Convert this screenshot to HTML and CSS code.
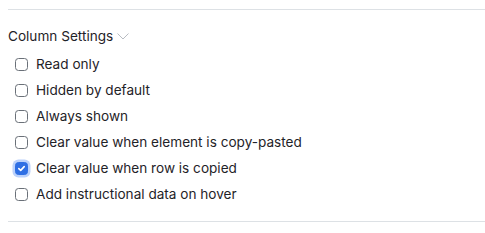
FILE: index.html
```html
<!DOCTYPE html>
<html>
<head>
<meta charset="utf-8">
<link rel="stylesheet" href="styles.css">
</head>
<body>
<section class="panel">
  <div class="title">Column Settings
    <svg class="chev" width="12" height="7" viewBox="0 0 12 7"><path d="M0.5 0.5 L6 6 L11.5 0.5" fill="none" stroke="#b8bcc2" stroke-width="1"/></svg>
  </div>
  <ul class="opts">
    <li><span class="cb"></span>Read only</li>
    <li><span class="cb"></span>Hidden by default</li>
    <li><span class="cb"></span>Always shown</li>
    <li><span class="cb"></span>Clear value when element is copy-pasted</li>
    <li><span class="cb checked"><svg width="9" height="9" viewBox="0 0 9 9"><path d="M1.8 4.6 L3.7 6.4 L7.2 2.6" fill="none" stroke="#fff" stroke-width="1.6" stroke-linecap="round" stroke-linejoin="round"/></svg></span>Clear value when row is copied</li>
    <li><span class="cb"></span>Add instructional data on hover</li>
  </ul>
</section>
</body>
</html>
```
FILE: styles.css
```css
html, body { margin: 0; padding: 0; background: #fff; }
body { padding: 9px 0 0 8px; font-family: Inter, "Noto Sans", sans-serif; color: #1f2328; font-size: 13.6px; }
.panel { border-top: 1px solid #dde1e5; border-bottom: 1px solid #dde1e5; padding: 17px 0 14px; }
.title { display: flex; align-items: center; height: 18px; line-height: 18px; gap: 4px; }
.chev { margin-top: 1px; }
.opts { list-style: none; margin: 6px 0 0; padding: 0 0 0 7px; }
.opts li { display: flex; align-items: center; height: 26px; gap: 8px; line-height: 18px; }
.cb { width: 11px; height: 11px; border: 1px solid #6a7078; border-radius: 3.5px; box-sizing: content-box; flex: none; display: flex; align-items: center; justify-content: center; }
.cb.checked { background: #2f6fe4; border-color: #2f6fe4; box-shadow: 0 0 0 2.5px #bcd2fb; }
```
